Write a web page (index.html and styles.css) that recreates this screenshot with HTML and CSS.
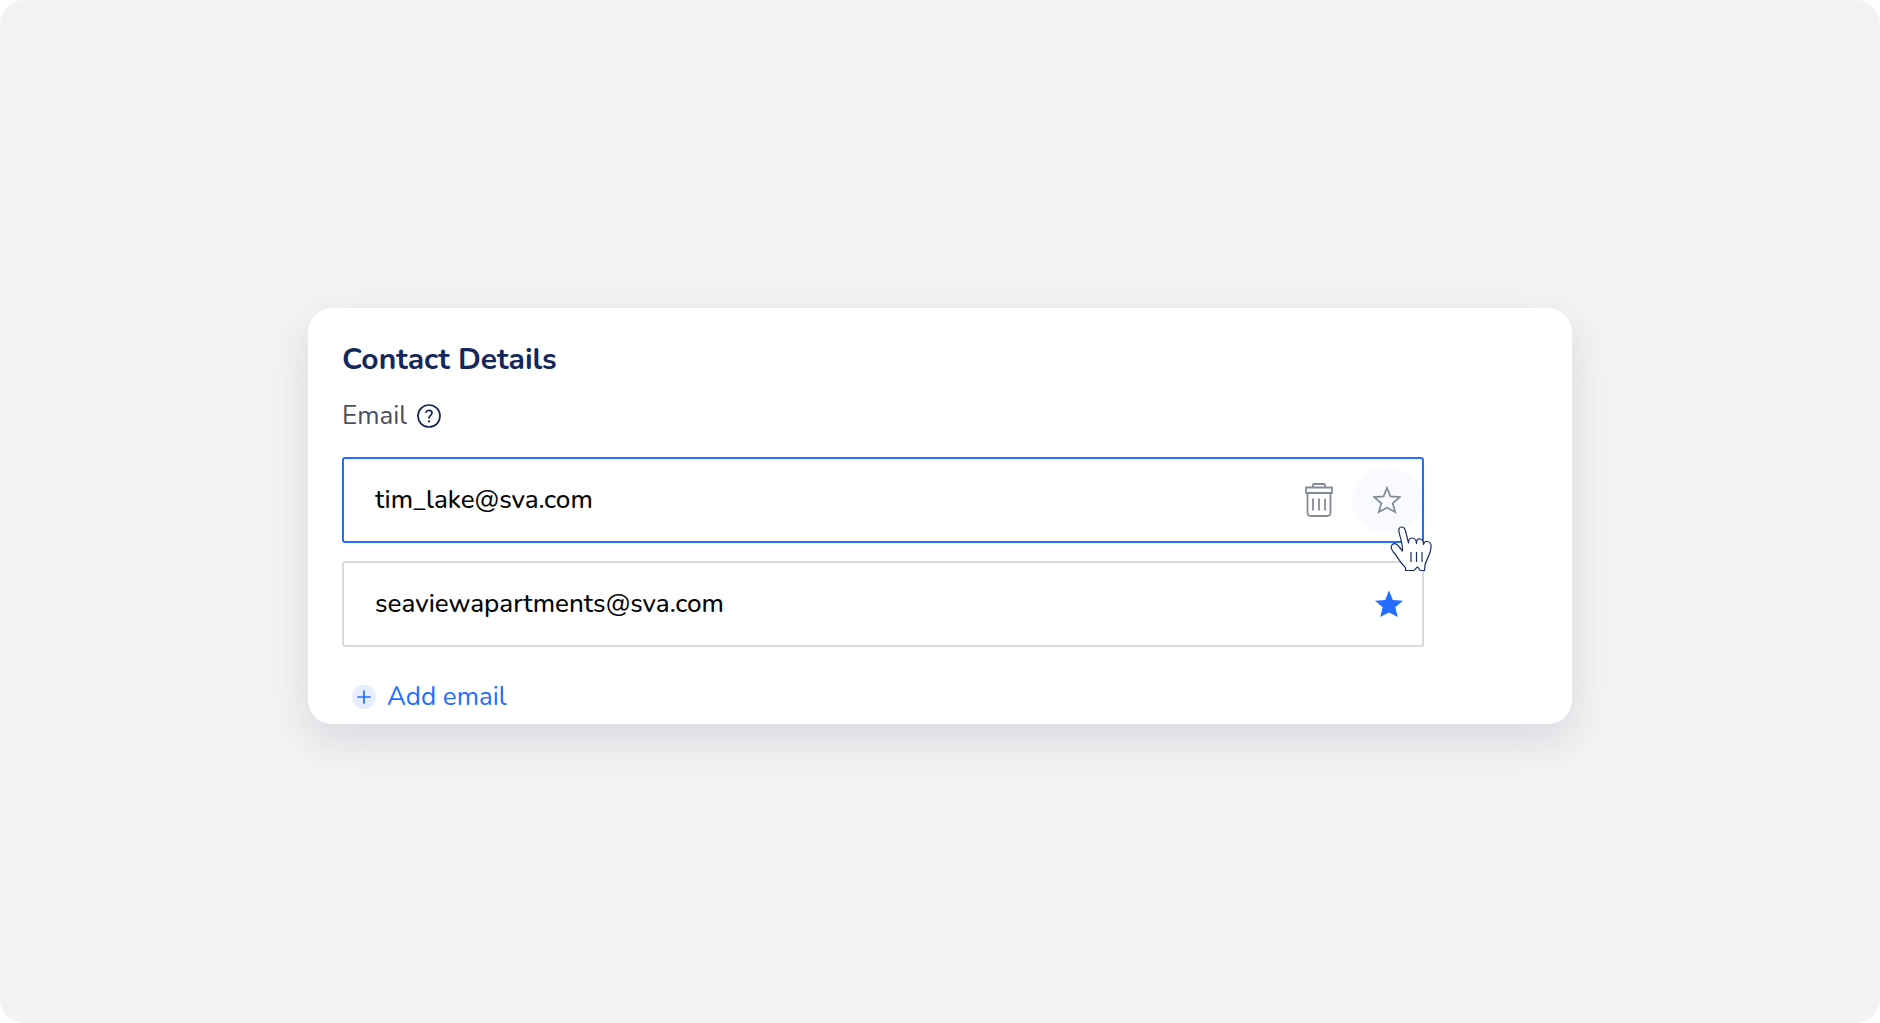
FILE: index.html
```html
<!DOCTYPE html>
<html lang="en">
<head>
  <meta charset="UTF-8">
  <meta name="viewport" content="width=device-width, initial-scale=1">
  <title>Contact Details</title>
  <link rel="stylesheet" href="styles.css">
</head>
<body>
  <main class="stage">
    <section class="card">
      <h2>Contact Details</h2>
      <div class="field-label">
        <label for="email1">Email</label>
        <button type="button" class="help" aria-label="Help">
          <svg viewBox="0 0 24 24" fill="none" stroke="currentColor" stroke-width="1.7" stroke-linecap="round">
            <circle cx="12" cy="12" r="11"/>
            <path d="M9 8.2C9.4 6.9 10.6 6.3 12 6.3c1.700 0 3 1 3 2.700 0 2.300-3 2.400-3 5"/>
            <path d="M12 17.300v.2" stroke-width="2.2"/>
          </svg>
        </button>
      </div>

      <div class="email-list">
        <div class="email-row active">
          <input type="email" id="email1" value="tim_lake@sva.com">
          <button type="button" class="icon-button" aria-label="Delete email">
            <svg class="trash" viewBox="0 0 28 34" fill="none" stroke="currentColor" stroke-width="1.8" stroke-linejoin="round">
              <rect x="1" y="4.500" width="26" height="5.500"/>
              <path d="M8 4.500V2c0-.6.4-1 1-1h10c.6 0 1 .4 1 1v2.500M2.500 10v19.500c0 2 1.500 3.500 3.500 3.500h16c2 0 3.500-1.500 3.500-3.500V10M8 15.500v12M14 15.500v12M20 15.500v12"/>
            </svg>
          </button>
          <button type="button" class="icon-button hovered" aria-label="Make primary">
            <svg class="star" viewBox="0 0 28 28" fill="none" stroke="currentColor" stroke-width="1.8">
              <path d="M14 2l3.400 8.400 9.600.6-7.300 6.200 2.500 8.800L14 21.800 5.800 26l2.500-8.800L1 11l9.600-.6z"/>
            </svg>
          </button>
          <svg class="pointer" viewBox="0 0 42 46" fill="#fff" stroke="#1b2f63" stroke-width="1.2" stroke-linejoin="round">
            <path d="M15.500 44.500v-3C10 37 8 31 3 25.500c-2-2.500-2.500-4.500-1-6.500 2-2 4.500-1 6 .5l4.500 5.500C13 18 9.500 10 9 5.500 8.500 3 9.500 1 11.500 1s3.500 1.500 4 4l3 12c0-3 1-5 3.500-5s4 1.500 4.500 5c0-3 1-4.500 3.500-4s3.500 2 3.500 5c1-2.500 2-3 4-2.500 2.500.5 4 2.500 3.500 6-.5 8-4.500 11-6 17.500l-.5 5.500h-4c-1.500-.5-1.500-3-3-3.500-1.500.5-2 3-4 3.500z"/>
            <path d="M21 26v10M26.500 26v10M32 26v10M26.500 16v2M33.500 17v2" fill="none"/>
          </svg>
        </div>
        <div class="email-row">
          <input type="email" id="email2" aria-label="Primary email" value="seaviewapartments@sva.com">
          <button type="button" class="icon-button primary" aria-label="Primary email">
            <svg class="star" viewBox="0 0 28 28" fill="currentColor">
              <path d="M14 .5l3.800 9.500 10.200.7-7.700 6.500 2.500 9.800L14 22.500 5.200 27l2.500-9.800L0 10.700 10.200 10z"/>
            </svg>
          </button>
        </div>
      </div>

      <button type="button" class="add-email">
        <svg viewBox="0 0 24 24">
          <circle cx="12" cy="12" r="12" fill="#e6edff"/>
          <path d="M12 6v12M6 12h12" stroke="currentColor" stroke-width="1.7" stroke-linecap="round"/>
        </svg>
        Add email
      </button>
    </section>
  </main>
</body>
</html>
```
FILE: styles.css
```css
* {
  box-sizing: border-box;
}
body {
  margin: 0;
  background-color: #ffffff;
  color: #050608;
  font-family: Nunito, Lato, "Open Sans", sans-serif;
}
button {
  padding: 0;
  border: none;
  background: none;
  font-family: inherit;
  cursor: pointer;
}
svg {
  display: block;
}
.stage {
  display: flex;
  align-items: center;
  justify-content: center;
  min-height: 100vh;
  padding-top: 9px;
  background-color: #f3f3f3;
  border-radius: 24px;
}
.card {
  width: 68%;
  max-width: 1264px;
  padding: 34px 34px 9px;
  background-color: #ffffff;
  border-radius: 24px;
  box-shadow: 0 16px 40px rgba(40, 50, 100, 0.13);
}
.card h2 {
  margin: 0;
  font-size: 30px;
  line-height: 36px;
  font-weight: 700;
  color: #14275c;
}
.field-label {
  display: flex;
  align-items: center;
  gap: 10px;
  margin-top: 20px;
  font-size: 26px;
  line-height: 36px;
  color: #4a4f5c;
}
.help {
  color: #14275c;
}
.help svg {
  width: 24px;
  height: 24px;
}
.email-list {
  display: grid;
  gap: 18px;
  max-width: 1082px;
  margin-top: 23px;
}
.email-row {
  position: relative;
  display: flex;
  align-items: center;
  height: 86px;
  padding-left: 31px;
  border: 2px solid #d7d9e2;
  border-radius: 3px;
}
.email-row.active {
  border-color: #236dff;
}
.email-row input {
  flex: 1;
  min-width: 0;
  padding: 0;
  border: none;
  outline: none;
  background: none;
  font-family: inherit;
  font-size: 26px;
  line-height: 36px;
  font-weight: 500;
  color: inherit;
}
.icon-button {
  display: flex;
  align-items: center;
  justify-content: center;
  width: 66px;
  height: 66px;
  border-radius: 50%;
  color: #858b98;
}
.icon-button.hovered {
  width: 70px;
  background-color: #f8faff;
}
.icon-button.primary {
  color: #236dff;
}
.trash {
  width: 28px;
  height: 34px;
}
.star {
  width: 28px;
  height: 28px;
}
.pointer {
  position: absolute;
  top: 67px;
  right: -10px;
  z-index: 1;
  width: 42px;
  height: 46px;
}
.add-email {
  display: flex;
  align-items: center;
  gap: 11px;
  margin-top: 32px;
  margin-left: 10px;
  font-size: 26px;
  line-height: 36px;
  color: #236dff;
}
.add-email svg {
  width: 24px;
  height: 24px;
}
```
